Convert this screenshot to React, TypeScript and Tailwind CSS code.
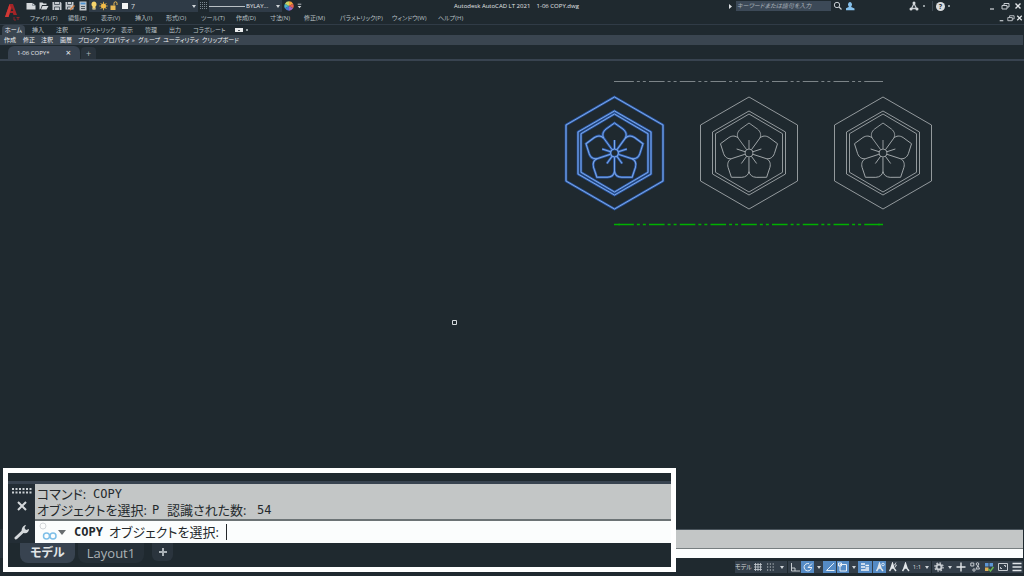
import type { ReactNode } from 'react'

const menus = [
  { label: 'ファイル(F)', width: 'w-[38px]' },
  { label: '編集(E)', width: 'w-[33px]' },
  { label: '表示(V)', width: 'w-[34px]' },
  { label: '挿入(I)', width: 'w-[31px]' },
  { label: '形式(O)', width: 'w-[35px]' },
  { label: 'ツール(T)', width: 'w-[35px]' },
  { label: '作成(D)', width: 'w-[34px]' },
  { label: '寸法(N)', width: 'w-[34px]' },
  { label: '修正(M)', width: 'w-[36px]' },
  { label: 'パラメトリック(P)', width: 'w-[52px]' },
  { label: 'ウィンドウ(W)', width: 'w-[46px]' },
  { label: 'ヘルプ(H)', width: 'w-[38px]' },
]

const ribbonTabs = [
  { label: '挿入', width: 'w-6' },
  { label: '注釈', width: 'w-6' },
  { label: 'パラメトリック', width: 'w-[41px]' },
  { label: '表示', width: 'w-6' },
  { label: '管理', width: 'w-6' },
  { label: '出力', width: 'w-6' },
  { label: 'コラボレート', width: 'w-[42px]' },
]

const panels = [
  { label: '作成', width: 'w-[19px]' },
  { label: '修正', width: 'w-[18px]' },
  { label: '注釈', width: 'w-[19px]' },
  { label: '画層', width: 'w-[18px]' },
  { label: 'ブロック', width: 'w-[25px]' },
  { label: 'プロパティ', width: 'w-[35px]', arrow: true },
  { label: 'グループ', width: 'w-[25px]' },
  { label: 'ユーティリティ', width: 'w-[39px]' },
  { label: 'クリップボード', width: 'w-[40px]' },
]

function Icon({ children, label, className = 'w-[13px]' }: { children: ReactNode; label: string; className?: string }) {
  return (
    <button aria-label={label} className={`flex h-3 flex-shrink-0 items-center justify-center ${className}`}>
      <svg width="10" height="10" viewBox="0 0 10 10" fill="none" stroke="#c6cbd0" strokeWidth="1">
        {children}
      </svg>
    </button>
  )
}

function Arrow({ className = 'w-2' }: { className?: string }) {
  return (
    <span className={`flex flex-shrink-0 items-center justify-center ${className}`}>
      <svg width="4" height="3" viewBox="0 0 4 3">
        <path d="M0 0h4L2 3z" fill="#cfd4d8" />
      </svg>
    </span>
  )
}

// Minimise, restore and close
function WindowButtons({ narrow }: { narrow?: boolean }) {
  const width = narrow ? 'w-[9px]' : 'w-[13px]'
  return (
    <div className="flex items-center">
      <Icon label="最小化" className={width}>
        <path d="M3 8h4" strokeWidth="1.3" />
      </Icon>
      <Icon label="元に戻す" className={width}>
        <path d="M4 4.500V2.500h5v3.500H7M2 4.500h5v3.500H2z" />
      </Icon>
      <Icon label="閉じる" className={width}>
        <path d="M2.500 2.500l5 5M7.500 2.500l-5 5" strokeWidth="1.400" stroke="#e0e4e7" />
      </Icon>
    </div>
  )
}

function TitleBar() {
  return (
    <div className="flex h-3 items-center">
      <Icon label="新規"><path d="M.5 2h6l3 2.500V8.500h-9z" fill="#d5d9dc" stroke="none" /><path d="M6.500 2v2.500h3" stroke="#68737c" strokeWidth=".6" /></Icon>
      <Icon label="開く"><path d="M.5 8.500v-7h3l1 1h3v1.500H3L1.500 8zM3.500 5h6L7.500 8.500H2z" fill="#d5d9dc" stroke="none" /></Icon>
      <Icon label="上書き保存"><path d="M.5 1h8l1 1v7h-9z" fill="#c5cace" stroke="none" /><path d="M2.500 1v2.500h5V1M2.500 9V6h5v3" stroke="#3b464f" strokeWidth=".8" /></Icon>
      <Icon label="名前を付けて保存"><path d="M.5 1h8v7.500h-8z" fill="#c5cace" stroke="none" /><path d="M2.500 1v2.500h4V1M2.500 8.500V6h3" stroke="#3b464f" strokeWidth=".8" /><path d="M5 9l4.500-4.500" stroke="#cf8246" strokeWidth="1.500" /></Icon>
      <Icon label="印刷"><path d="M1.500 .5h7v9h-7z" fill="#c2c8cd" stroke="none" /><path d="M2.500 2.500h5" stroke="#4e94d4" strokeWidth="1.800" /><path d="M3 5.500h4M3 7.500h4" stroke="#4e5962" /></Icon>

      <label className="flex h-full w-[109px] flex-shrink-0 items-center bg-[#2f3b47]">
        <svg width="42" height="10" viewBox="0 0 42 10" aria-hidden="true">
          <path d="M5 .5a2.800 2.800 0 0 1 1.500 5V8.500h-3v-3A2.800 2.800 0 0 1 5 .5" fill="#f6d46c" />
          <path d="M3.500 7.800h3" stroke="#a8a8a0" />
          <circle cx="14.500" cy="5" r="2.500" fill="#f3bd49" />
          <path d="M14.500 .8v8.400M10.300 5h8.400M11.500 2l6 6M17.500 2l-6 6" stroke="#f3bd49" strokeWidth=".8" />
          <path d="M21.500 4.500h5V9h-5z" fill="#eaba55" />
          <path d="M25 4.500V2.300a1.500 1.500 0 0 1 3 0V4" fill="none" stroke="#eaba55" />
          <path d="M33 2h6v6h-6z" fill="#f4f5f5" />
        </svg>
        <select aria-label="画層" className="w-14 appearance-none bg-transparent text-[7px] leading-none text-[#d7dbde] outline-none">
          <option>7</option>
        </select>
        <Arrow className="ml-auto w-2" />
      </label>
      <Icon label="線種" className="w-[11px]"><path d="M1 1.500h8M1 3.500h8M1 5.500h8M1 7.500h8" stroke="#7a868f" strokeDasharray="1 1" /></Icon>
      <label className="flex h-full w-[73px] flex-shrink-0 items-center bg-[#2f3b47]">
        <span className="mr-px h-px w-9 bg-[#b9c0c5]" />
        <select aria-label="線種の選択" className="w-7 appearance-none bg-transparent text-[6px] leading-none text-[#e2e5e8] outline-none">
          <option>BYLAY...</option>
        </select>
        <Arrow className="ml-auto w-2" />
      </label>
      <Icon label="色" className="w-[13px]">
        <g stroke="none">
          <path d="M5 5V.3A4.700 4.700 0 0 1 9.100 2.700z" fill="#f0a13d" />
          <path d="M5 5l4.100-2.300a4.700 4.700 0 0 1 0 4.600z" fill="#e2604f" />
          <path d="M5 5l4.100 2.300A4.700 4.700 0 0 1 5 9.700z" fill="#9c63bf" />
          <path d="M5 5v4.700A4.700 4.700 0 0 1 .9 7.300z" fill="#4774d0" />
          <path d="M5 5L.9 7.300a4.700 4.700 0 0 1 0-4.600z" fill="#49b3c8" />
          <path d="M5 5L.9 2.700A4.700 4.700 0 0 1 5 .3z" fill="#c6d465" />
        </g>
      </Icon>
      <Icon label="カスタマイズ" className="w-[9px]"><path d="M3 3h4" /><path d="M3 5h4L5 7.500z" fill="#d5d9dc" stroke="none" /></Icon>

      <h1 className="flex-1 whitespace-pre text-center text-[6px] text-[#e2e5e8]">Autodesk AutoCAD LT 2021{'    '}1-06 COPY.dwg</h1>

      <svg width="3" height="5" viewBox="0 0 3 5" className="mr-1"><path d="M0 0l3 2.500L0 5z" fill="#dde1e4" /></svg>
      <input aria-label="検索" placeholder="キーワードまたは語句を入力" className="h-[10px] w-[95px] flex-shrink-0 bg-[#3c4957] px-px text-[6px] italic leading-none text-white outline-none placeholder:text-[#aab2ba]" />
      <Icon label="検索する"><circle cx="4" cy="4" r="2.700" /><path d="M6 6l2.500 2.500" strokeWidth="1.300" /></Icon>
      <Icon label="サインイン"><path d="M4 1a2.200 2.500 0 0 1 1.300 4.300V6L8.500 7.500v1.800H-.3V7.500l3-1.500V5.300A2.200 2.500 0 0 1 4 1" fill="#86c1ec" stroke="none" /></Icon>
      <span className="w-[50px] flex-shrink-0" />
      <Icon label="Autodesk App Store"><path d="M5 2.500L2.500 7.500h5z" strokeWidth="1.300" /><g fill="#d7dbde" stroke="none"><circle cx="5" cy="2" r="1.500" /><circle cx="2" cy="8" r="1.500" /><circle cx="8" cy="8" r="1.500" /></g></Icon>
      <span className="mx-[3px] h-[2px] w-[2px] rounded-full bg-[#b9c0c5]" />
      <span className="ml-1 mr-[3px] h-[10px] w-px bg-[#3b4650]" />
      <button aria-label="ヘルプ" className="flex h-[9px] w-[9px] items-center justify-center rounded-full bg-[#d9dcde] text-[7px] font-bold leading-none text-[#273138]">?</button>
      <span className="mx-[3px] h-[2px] w-[2px] rounded-full bg-[#b9c0c5]" />
      <span className="w-[32px] flex-shrink-0" />
      <WindowButtons />
    </div>
  )
}

function Header() {
  return (
    <header>
      <div className="flex h-[25px] border-b border-[#303b46]">
        <button aria-label="アプリケーション メニュー" className="flex w-6 flex-shrink-0 items-center justify-center">
          <svg width="16" height="20" viewBox="0 0 16 20">
            <path d="M1 15L5.500 2h3.500l4 11h-3.500l-.7-2H6L4.600 15z" fill="#a32427" />
            <path d="M1 15L5.500 2l1.500 4-2.500 9zM7 8.500h2L8 5.500z" fill="#cf3835" />
            <path d="M6.800 9L8 5.500 9.200 9z" fill="#1f292f" />
            <path d="M10 15v3h2M12.500 15.500h3M14 15.500V18" stroke="#8d2528" fill="none" />
          </svg>
        </button>
        <div className="min-w-0 flex-1">
          <TitleBar />
          <nav className="flex h-3 items-center pl-[6px]">
            {menus.map(m => (
              <button key={m.label} className={`flex-shrink-0 whitespace-nowrap text-left text-[#b9c0c5] ${m.width}`}>
                {m.label}
              </button>
            ))}
            <span className="flex-1" />
            <WindowButtons narrow />
          </nav>
        </div>
      </div>

      {/* Ribbon tabs */}
      <div className="flex h-[10px] items-center text-[#b9c0c5]">
        <button className="ml-[2px] mr-[7px] h-full w-[23px] rounded-t-sm bg-[#3a4550] text-[#f0f2f3]">ホーム</button>
        {ribbonTabs.map(t => (
          <button key={t.label} className={`flex-shrink-0 whitespace-nowrap text-left ${t.width}`}>
            {t.label}
          </button>
        ))}
        <button aria-label="リボンを最小化" className="flex h-1 w-2 items-center justify-center bg-[#e9ebec]">
          <span className="h-px w-[2px] bg-[#4b555d]" />
        </button>
        <span className="mx-[3px] h-[2px] w-[2px] rounded-full bg-[#b9c0c5]" />
      </div>

      {/* Panel titles */}
      <div className="mr-px flex h-[10px] items-center bg-[#3a4550] pl-1 text-[#eceef0]">
        {panels.map(p => (
          <button key={p.label} className={`flex h-full flex-shrink-0 items-center whitespace-nowrap ${p.width}`}>
            {p.label}
            {p.arrow && <span className="pl-[2px]">»</span>}
          </button>
        ))}
      </div>

      {/* Drawing file tabs */}
      <div className="flex h-4 items-end border-b-2 border-[#384350] pl-2">
        <div className="flex h-[13px] w-[72px] items-center rounded-t-md bg-[#384350] pl-[9px] text-[#eceef0]">
          <span className="flex-1 text-[6px]">1-06 COPY*</span>
          <button aria-label="タブを閉じる" className="mr-[9px] text-[9px] leading-none">×</button>
        </div>
        <button aria-label="新しいタブ" className="ml-px flex h-3 w-[15px] items-center justify-center rounded-t bg-[#2a343d] text-[9px] leading-none text-[#aab2b8]">+</button>
      </div>
    </header>
  )
}

const petalAngles = [0, 72, 144, 216, 288]

function Crest() {
  return (
    <g fill="none">
      <path d="M0-56L48.500-28V28L0 56-48.500 28V-28z" />
      <path d="M0-42L36.500-21V21L0 42-36.500 21V-21z" />
      <path d="M0-39L33.500-19.300V19.300L0 39-33.500 19.300V-19.300z" />
      {petalAngles.map(a => (
        <g key={a} transform={`rotate(${a})`}>
          <path d="M-2.500-3.500L-10.800-14.900C-12.500-18-11.500-21.500-8.500-23.900L0-30 8.500-23.900C11.500-21.500 12.500-18 10.800-14.900" />
          <path d="M0-4V-13" />
        </g>
      ))}
      <circle r="4" />
    </g>
  )
}

function CenterLine({ y, color, width }: { y: number; color: string; width: number }) {
  return (
    <g stroke={color} strokeWidth={width}>
      <path d={`M614 ${y}h6M878 ${y}h5`} />
      <path d={`M618.250 ${y}H881`} strokeDasharray="15.600 3 3 3 3 3.150" />
    </g>
  )
}

function Canvas() {
  return (
    <main className="min-h-[468px] flex-1">
      <svg className="h-full w-full" viewBox="0 61 1024 468" preserveAspectRatio="xMaxYMin meet" role="img" aria-label="作図領域">
        <CenterLine y={81.5} color="#7c8488" width={1} />
        <CenterLine y={224.5} color="#00b000" width={1.5} />
        <g transform="translate(614.500 153)" stroke="#2b5aab" strokeWidth="2.500"><Crest /></g>
        <g transform="translate(614.500 153)" stroke="#7ea8e6"><Crest /></g>
        <g transform="translate(749 153)" stroke="#a0a6a9" strokeWidth=".9"><Crest /></g>
        <g transform="translate(883 153)" stroke="#a0a6a9" strokeWidth=".9"><Crest /></g>
        <path d="M452.500 320.500h4v4h-4z" fill="none" stroke="#d5d9dc" />
      </svg>
    </main>
  )
}

function CommandPanel() {
  return (
    <section className="absolute bottom-1 left-[3px] right-[34%] z-10 border-[5px] border-white bg-[#1f292f] pt-[8px] text-[13px] leading-4">
      <div className="border-t-[3px] border-[#384350]" />
      <div className="flex bg-[#232d35]">
        <div className="flex w-[27px] flex-shrink-0 flex-col items-center pt-1">
          <svg width="20" height="6" viewBox="0 0 20 6">
            <path d="M0 1h20M0 4.500h20" stroke="#ccd1d5" strokeWidth="2" strokeDasharray="2 1.500" />
          </svg>
          <button aria-label="閉じる" className="mt-[7px]">
            <svg width="10" height="10" viewBox="0 0 10 10"><path d="M1 1l8 8M9 1L1 9" stroke="#d5d9dc" strokeWidth="2" /></svg>
          </button>
          <button aria-label="カスタマイズ" className="mt-[13px]">
            <svg width="16" height="16" viewBox="0 0 16 16">
              <path d="M2 14L9 7.500" stroke="#d5d9dc" strokeWidth="3" strokeLinecap="round" />
              <path d="M8 8.500C7 5 8.500 1.500 12 1L10.500 4l1.500 2 3-1c0 3.500-3 5.500-7 3.500" fill="#d5d9dc" />
            </svg>
          </button>
        </div>
        <div className="min-w-0 flex-1 text-[#24292c]">
          <div className="h-[37px] border-b-2 border-[#6c7375] bg-[#c3c6c6] pl-[2px] pt-[2px]">
            <p className="flex">
              <span className="w-14">コマンド:</span>
              <span className="font-['DejaVu_Sans_Mono',monospace] text-xs leading-4">COPY</span>
            </p>
            <p className="flex whitespace-nowrap">
              <span className="w-[115px]">オブジェクトを選択:</span>
              <span className="w-[15px] font-['DejaVu_Sans_Mono',monospace] text-xs leading-4">P</span>
              <span className="w-[90px]">認識された数:</span>
              <span className="font-['DejaVu_Sans_Mono',monospace] text-xs leading-4">54</span>
            </p>
          </div>
          <div className="flex h-[22px] items-center bg-[#fbfdfd]">
            <svg width="23" height="20" viewBox="0 0 23 20" fill="none">
              <circle cx="8" cy="4" r="3" stroke="#d3d7da" />
              <circle cx="11.500" cy="14" r="3" stroke="#7dbfe8" strokeWidth="1.500" />
              <circle cx="18" cy="14" r="3" stroke="#7dbfe8" strokeWidth="1.500" />
            </svg>
            <svg width="8" height="5" viewBox="0 0 8 5" className="mr-2"><path d="M0 0h8L4 5z" fill="#686d70" /></svg>
            <label htmlFor="command" className="flex whitespace-nowrap">
              <span className="w-[35px] font-['DejaVu_Sans_Mono',monospace] text-xs font-bold leading-4">COPY</span>
              <span className="w-[117px]">オブジェクトを選択:</span>
            </label>
            <input id="command" className="h-4 min-w-0 flex-1 border-l border-[#24282b] bg-transparent pl-px outline-none" />
          </div>
        </div>
      </div>
      <div className="flex h-6 items-start pl-3 text-[#aab1b6]">
        <button className="h-5 w-[55px] rounded-b-lg bg-[#384350] text-xs font-bold text-[#e2e5e7]">モデル</button>
        <button className="ml-[3px] h-5 w-[66px] rounded-b-lg bg-[#263038]">Layout1</button>
        <button aria-label="新しいレイアウト" className="ml-2 flex h-[18px] w-[21px] items-center justify-center rounded-b-md bg-[#2a343d]">
          <svg width="8" height="8" viewBox="0 0 8 8"><path d="M4 0v8M0 4h8" stroke="#aab1b6" strokeWidth="2" /></svg>
        </button>
      </div>
    </section>
  )
}

function Person({ mark }: { mark?: ReactNode }) {
  return (
    <>
      <path d="M4.500 1v3.500L1.500 9M4.500 4.500L8 9M4.500 1.500L3 6h3z" strokeWidth="1.400" stroke="#e2e6e9" />
      {mark}
    </>
  )
}

function StatusBar() {
  return (
    <footer className="flex h-[18px] items-center justify-end pr-px">
      <div className="flex h-3 items-center bg-[#333e49] text-[#d5d9dc]">
        <button className="w-4 whitespace-nowrap text-left">モデル</button>
        <Icon label="グリッド"><path d="M1 2.500h8M1 5h8M1 7.500h8M2.500 1v8M5 1v8M7.500 1v8" strokeWidth=".8" /></Icon>
        <Icon label="スナップ"><path d="M1 2h8M1 5h8M1 8h8" strokeDasharray="1.200 1.600" strokeWidth="1.200" /></Icon>
        <Arrow className="w-[10px]" />
        <Icon label="直交モード" className="w-[14px] border-l border-[#1f292f]"><path d="M1.500 1v8H10M1.500 6H5v3" /></Icon>
        <Icon label="極トラッキング" className="w-[13px] bg-[#558bc5]"><path d="M8.500 5A3.700 3.700 0 1 1 6 1.700M5 5.500h4M5 5.500L9 1.500" stroke="#e8eef5" /></Icon>
        <Arrow className="w-[9px]" />
        <Icon label="オブジェクト スナップ トラッキング" className="w-[13px] bg-[#558bc5]"><path d="M9 1L1.500 8.500h8" stroke="#e8eef5" /></Icon>
        <Icon label="オブジェクト スナップ" className="w-[13px] border-l border-[#333e49] bg-[#558bc5]"><path d="M2 2.500h6.500V9H2zM.5 1h3v3h-3z" stroke="#e8eef5" /></Icon>
        <Arrow className="w-[9px]" />
        <Icon label="線の太さ" className="w-[14px] bg-[#558bc5]"><path d="M1 2h4M1 5h4M1 8h8M5.500 3.500H9M5.500 6H9" stroke="#f1f5f9" strokeWidth="1.500" /></Icon>
        <Icon label="注釈の表示" className="w-[14px] border-l border-[#333e49] bg-[#558bc5]"><Person mark={<circle cx="8" cy="2.500" r="1.300" stroke="#d8e5f2" />} /></Icon>
        <Icon label="自動尺度"><Person mark={<path d="M8 .5L6.500 3h2L7 5.500" />} /></Icon>
        <Icon label="注釈尺度"><Person /></Icon>
        <button className="w-[10px] whitespace-nowrap text-[6px]">1:1</button>
        <Arrow className="w-[9px]" />
        <Icon label="ワークスペース" className="w-[14px] border-l border-[#1f292f]"><circle cx="5" cy="5" r="2.500" strokeWidth="2" /><circle cx="5" cy="5" r="4.100" strokeWidth="1.300" strokeDasharray="1.600 1.620" /></Icon>
        <Arrow className="w-[9px]" />
        <Icon label="注釈モニター" className="w-[14px]"><path d="M5 .5v9M.5 5h9" strokeWidth="1.400" stroke="#e2e6e9" /></Icon>
        <Icon label="オブジェクトを選択表示" className="w-[14px]"><path d="M.8 1h3v3h-3zM6 7L8 3.500 9.500 7z" /><circle cx="7.500" cy="2" r="1.300" /><circle cx="4" cy="8" r="1.200" /></Icon>
        <Icon label="ハードウェア アクセラレーション" className="w-[14px]"><path d="M1 1h3.500v3.500H1zM5.500 1H9v3.500H5.500z" fill="#5d96d5" stroke="none" /><path d="M1 5.500h3.500V9H1z" fill="#dcae56" stroke="none" /><path d="M4.500 7l2 2 3-4" stroke="#69b852" strokeWidth="1.400" /></Icon>
        <Icon label="フルスクリーン" className="w-[14px]"><path d="M.5 1.500h9v7h-9zM2.500 6.500V5M2.500 6.500H4M7.500 3.500H6M7.500 3.500V5" /></Icon>
        <Icon label="カスタマイズ"><path d="M.5 1.500h9M.5 5h9M.5 8.500h9" strokeWidth="1.300" stroke="#e2e6e9" /></Icon>
      </div>
    </footer>
  )
}

export default function App() {
  return (
    <div className="relative flex min-h-screen flex-col overflow-hidden bg-[#1f292f] font-['Open_Sans','Noto_Sans_CJK_JP',sans-serif] text-[6px] leading-none text-[#d5d9dc] [font-feature-settings:'palt']">
      <Header />
      <Canvas />
      {/* Docked command line */}
      <div className="flex">
        <div className="w-4 bg-[#28323b]" />
        <div className="mr-px flex-1">
          <div className="h-5 border-b border-t border-b-[#777e80] border-t-[#4a545c] bg-[#c3c6c6]" />
          <div className="h-[9px] bg-[#fbfdfd]" />
        </div>
      </div>
      <StatusBar />
      <CommandPanel />
    </div>
  )
}
